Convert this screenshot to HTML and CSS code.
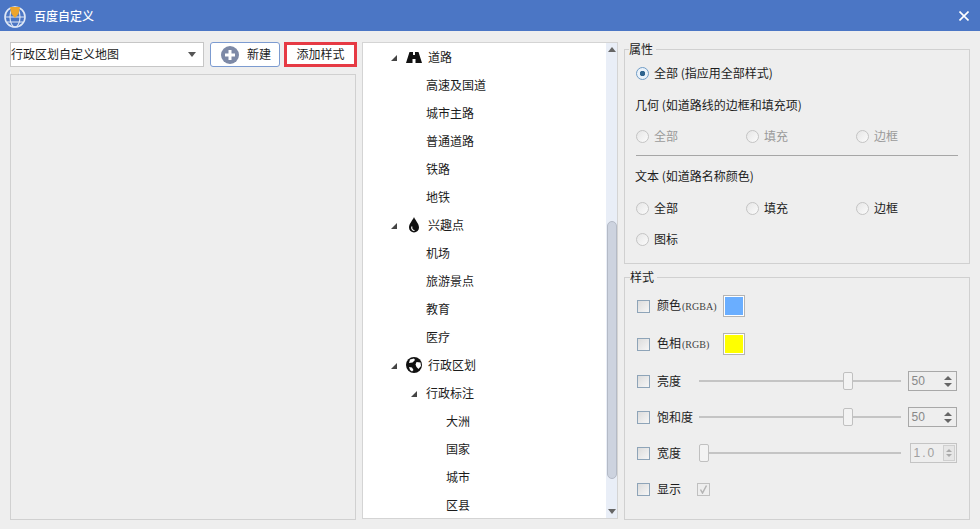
FILE: index.html
```html
<!DOCTYPE html>
<html lang="zh-CN">
<head>
<meta charset="utf-8">
<title>百度自定义</title>
<link rel="stylesheet" href="styles.css">
</head>
<body>
<header class="titlebar">
  <svg class="logo" width="24" height="24" viewBox="0 0 24 24">
    <circle cx="12" cy="13" r="10" fill="none" stroke="#dfe8f6" stroke-width="1.6"/>
    <ellipse cx="12" cy="13" rx="5" ry="10" fill="none" stroke="#dfe8f6" stroke-width="1.1"/>
    <path d="M2 13H22M4 18H20" stroke="#dfe8f6" stroke-width="1.1"/>
    <path d="M7 3H17L15.5 10 12 14 8.500 10Z" fill="#eda52c"/>
  </svg>
  <span class="title">百度自定义</span>
  <svg class="close" width="10" height="10" viewBox="0 0 10 10"><path d="M.5 .5L9.500 9.500M9.500 .5L.5 9.500" stroke="#fff" stroke-width="1.6"/></svg>
</header>
<main class="content">
  <section class="left">
    <div class="toolbar">
      <div class="select"><span>行政区划自定义地图</span><i class="caret"></i></div>
      <button class="btn new">
        <svg width="18" height="18" viewBox="0 0 18 18"><circle cx="9" cy="9" r="9" fill="#7d89a6"/><path d="M9 4V14M4 9H14" stroke="#fff" stroke-width="3"/></svg>
        <span>新建</span>
      </button>
      <button class="btn add">添加样式</button>
    </div>
    <div class="canvas"></div>
  </section>

  <section class="tree">
    <ul class="rows">
      <li class="row l1"><svg class="tri" width="6" height="6" viewBox="0 0 6 6"><path d="M6 0V6H0Z"/></svg>
        <svg class="ico" width="16" height="16" viewBox="0 0 16 16"><path d="M0 14L3.500 3H7V6H9V3H12.500L16 14H9.500V10H6.500V14Z" fill="#111"/></svg><span>道路</span></li>
      <li class="row l2">高速及国道</li>
      <li class="row l2">城市主路</li>
      <li class="row l2">普通道路</li>
      <li class="row l2">铁路</li>
      <li class="row l2">地铁</li>
      <li class="row l1"><svg class="tri" width="6" height="6" viewBox="0 0 6 6"><path d="M6 0V6H0Z"/></svg>
        <svg class="ico" width="16" height="16" viewBox="0 0 16 16"><path d="M8 0C9 3 13 6.500 13 10.500A5 5 0 0 1 3 10.500C3 6.500 7 3 8 0Z" fill="#111"/><path d="M6 9.500C5 11.500 6.500 13.500 8.500 13.500" stroke="#fff" stroke-width="1.200" fill="none"/></svg><span>兴趣点</span></li>
      <li class="row l2">机场</li>
      <li class="row l2">旅游景点</li>
      <li class="row l2">教育</li>
      <li class="row l2">医疗</li>
      <li class="row l1"><svg class="tri" width="6" height="6" viewBox="0 0 6 6"><path d="M6 0V6H0Z"/></svg>
        <svg class="ico" width="16" height="16" viewBox="0 0 16 16"><circle cx="8" cy="8" r="8" fill="#111"/><path d="M4 2.500L8 1.500 9 3 6.500 5.500 3 6ZM10.500 5L14.500 5.500 15 9 12.500 12 10.500 10 9.500 7.500ZM3 10L6 10.500 7.500 13 6 14.500 4 13Z" fill="#fff"/></svg><span>行政区划</span></li>
      <li class="row l2 parent"><svg class="tri" width="6" height="6" viewBox="0 0 6 6"><path d="M6 0V6H0Z"/></svg><span>行政标注</span></li>
      <li class="row l3">大洲</li>
      <li class="row l3">国家</li>
      <li class="row l3">城市</li>
      <li class="row l3">区县</li>
    </ul>
    <div class="scrollbar">
      <i class="arrow up"></i>
      <div class="gap-top"></div>
      <div class="thumb"></div>
      <div class="gap-bottom"></div>
      <i class="arrow down"></i>
    </div>
  </section>

  <section class="right">
    <fieldset class="group attrs">
      <legend>属性</legend>
      <label class="opt single"><i class="radio on"></i>全部 (指应用全部样式)</label>
      <p class="cap first">几何 (如道路线的边框和填充项)</p>
      <div class="opts muted">
        <label class="opt"><i class="radio"></i>全部</label>
        <label class="opt"><i class="radio"></i>填充</label>
        <label class="opt"><i class="radio"></i>边框</label>
      </div>
      <hr class="rule">
      <p class="cap">文本 (如道路名称颜色)</p>
      <div class="opts wide">
        <label class="opt"><i class="radio"></i>全部</label>
        <label class="opt"><i class="radio"></i>填充</label>
        <label class="opt"><i class="radio"></i>边框</label>
        <label class="opt"><i class="radio"></i>图标</label>
      </div>
    </fieldset>

    <fieldset class="group styles">
      <legend>样式</legend>
      <div class="srow tall"><i class="check"></i><span class="name">颜色<small>(RGBA)</small></span><i class="swatch blue"></i></div>
      <div class="srow tall"><i class="check"></i><span class="name">色相<small>(RGB)</small></span><i class="swatch yellow"></i></div>
      <div class="srow"><i class="check"></i><span class="lbl">亮度</span>
        <div class="slider"><i class="knob mid"></i></div>
        <div class="spin"><span>50</span><span class="arrows"><i class="sa up"></i><i class="sa down"></i></span></div></div>
      <div class="srow"><i class="check"></i><span class="lbl">饱和度</span>
        <div class="slider"><i class="knob mid"></i></div>
        <div class="spin"><span>50</span><span class="arrows"><i class="sa up"></i><i class="sa down"></i></span></div></div>
      <div class="srow"><i class="check"></i><span class="lbl">宽度</span>
        <div class="slider"><i class="knob"></i></div>
        <div class="spin off"><span>1.0</span><span class="arrows boxed"><i class="sa up"></i><i class="sa down"></i></span></div></div>
      <div class="srow"><i class="check"></i><span class="lbl">显示</span>
        <i class="check dis"><svg width="9" height="9" viewBox="0 0 9 9"><path d="M1.500 4.500L3.500 8 7.500 .5" fill="none" stroke="#b4b4b4" stroke-width="1.500"/></svg></i></div>
    </fieldset>
  </section>
</main>
</body>
</html>
```
FILE: styles.css
```css
* { box-sizing: border-box; }
html, body { margin: 0; height: 100%; }
body {
  width: 980px; height: 529px; overflow: hidden;
  background: #eeeeee; color: #1c1c1c;
  font: 12px/16px "Noto Sans CJK SC", "Noto Sans", sans-serif;
}
i { display: block; flex: none; }
ul { list-style: none; margin: 0; padding: 0; }
p { margin: 0; }

.titlebar {
  height: 31px; background: #4b76c5; color: #fff;
  display: flex; align-items: center; padding: 0 10px 0 3px;
}
.logo { flex: none; margin-right: 7px; }
.title { font-size: 12px; font-weight: 500; }
.close { margin-left: auto; margin-right: 1px; }

.content { display: flex; padding: 11px 10px 0; gap: 6px; height: 489px; }

/* left */
.left { width: 346px; flex: none; display: flex; flex-direction: column; }
.toolbar { display: flex; height: 25px; margin-bottom: 7px; }
.select {
  width: 194px; background: #fff; border: 1px solid #c6c6c6;
  display: flex; align-items: center; justify-content: space-between;
  padding: 0 7px 2px 0; white-space: nowrap;
}
.caret { width: 0; height: 0; border: 4px solid transparent; border-top: 5px solid #555; border-bottom: 0; margin-top: 2px; }
.btn { font: inherit; color: #1c1c1c; background: #fff; height: 25px; padding: 0 0 2px; }
.new {
  width: 70px; margin-left: 6px; border: 1px solid #7c9bd0; border-radius: 3px;
  display: flex; align-items: center; gap: 8px; padding: 0 0 0 10px;
}
.new span { margin-bottom: 2px; }
.add { width: 73px; margin-left: 4px; margin-right: -1px; border: 3px solid #e63a44; }
.canvas { flex: none; height: 446px; background: #eeeeee; border: 1px solid #d0d0d0; }

/* tree */
.tree {
  width: 256px; flex: none; height: 477px; background: #fff;
  border: 1px solid #d4d4d4; display: flex;
}
.rows { flex: 1; overflow: hidden; }
.row { height: 28px; display: flex; align-items: center; white-space: nowrap; }
.row.l1 { padding-left: 28px; }
.row.l2 { padding-left: 63px; }
.row.l3 { padding-left: 83px; }
.row.parent { padding-left: 48px; }
.row.parent .tri { margin-right: 9px; }
.tri { fill: #444; flex: none; margin-top: 1px; }
.ico { flex: none; margin: 0 6px 0 9px; }

.scrollbar { width: 11px; flex: none; background: #e9eef7; display: flex; flex-direction: column; align-items: center; }
.arrow { width: 0; height: 0; border: 4px solid transparent; margin: 4px 0; }
.arrow.up { border-bottom: 5px solid #666; border-top: 0; }
.arrow.down { border-top: 5px solid #666; border-bottom: 0; }
.gap-top { height: 165px; flex: none; }
.thumb { width: 10px; height: 258px; flex: none; background: #cdd3df; border: 1px solid #b4bac6; border-radius: 5px; }
.gap-bottom { flex: 1; }

/* right */
.right { width: 346px; flex: none; display: flex; flex-direction: column; }
.group { margin: 0; border: 1px solid #d0d0d0; padding: 0 11px; min-width: 0; }
.group legend { padding: 0 3px 0 0; margin-left: -7px; line-height: 16px; }
.attrs { height: 223px; margin-top: -1px; }
.styles { height: 251px; margin-top: 5px; padding: 0 12px; }

.opt { display: flex; align-items: center; gap: 5px; height: 16px; white-space: nowrap; }
.single { margin-top: 8px; }
.radio {
  width: 13px; height: 13px; border-radius: 50%;
  border: 1px solid #c4c4c4; background: linear-gradient(135deg, #e6e6e6, #fbfbfb);
}
.radio.on { border-color: #6f9cc6; background: radial-gradient(circle, #2f648f 0 2.500px, #eaf2fa 3px); }
.cap { height: 16px; white-space: nowrap; margin-left: -1px; }
.cap.first { margin-top: 16px; }
.opts { display: grid; grid-template-columns: 110px 110px 1fr; margin-top: 15px; }
.opts.wide { row-gap: 15px; margin-top: 16px; }
.muted { color: #9a9a9a; }
.rule { margin: 11px 0 12px; border: 0; border-top: 1px solid #a6a6a6; width: 322px; }

.srow { display: flex; align-items: center; height: 36px; }
.srow.tall { height: 38px; }
.styles .srow:first-of-type { margin-top: 2px; }
.check { width: 13px; height: 13px; border: 1px solid #8ea4b8; background: linear-gradient(135deg, #dcdcdc, #f6f6f6); margin-right: 7px; }
.check.dis { border-color: #c0c0c0; background: #eee; margin: 0 0 0 -2px; display: flex; align-items: center; justify-content: center; }
.name { width: 66px; white-space: nowrap; }
.name small { font: 10px/16px "Liberation Serif", serif; color: #444; margin-left: 1px; }
.swatch { width: 22px; height: 22px; border: 2px solid #fff; outline: 1px solid #b4b4b4; outline-offset: -1px; }
.blue { background: #6aaeff; }
.yellow { background: #ffff00; }
.lbl { width: 42px; white-space: nowrap; }
.slider {
  width: 202px; flex: none; height: 19px; display: flex; align-items: center;
  background: linear-gradient(#c4c4c4, #c4c4c4) center / 100% 2px no-repeat;
}
.knob { width: 10px; height: 18px; background: #f3f3f3; border: 1px solid #c0c0c0; border-radius: 2px; }
.knob.mid { margin-left: 144px; }
.spin {
  width: 50px; height: 20px; margin-left: 7px; border: 1px solid #a8a8a8; background: #eee;
  display: flex; align-items: center; justify-content: space-between;
  padding: 0 2px 0 3px; color: #888; font-family: "Liberation Sans", sans-serif; font-size: 12px;
}
.spin.off { width: 48px; margin-left: 9px; border-color: #c4c4c4; color: #a0a0a0; letter-spacing: 2px; padding-right: 1px; }
.arrows { display: flex; flex-direction: column; align-items: center; gap: 3px; width: 12px; }
.arrows.boxed { height: 16px; justify-content: center; border: 1px solid #cfcfcf; gap: 2px; background: #e6e6e6; }
.sa { width: 0; height: 0; border: 4px solid transparent; }
.sa.up { border-bottom: 4px solid #666; border-top: 0; }
.sa.down { border-top: 4px solid #666; border-bottom: 0; }
.boxed .sa { border-width: 3px; }
.boxed .sa.up { border-top: 0; border-bottom-color: #aaa; }
.boxed .sa.down { border-bottom: 0; border-top-color: #aaa; }
```
